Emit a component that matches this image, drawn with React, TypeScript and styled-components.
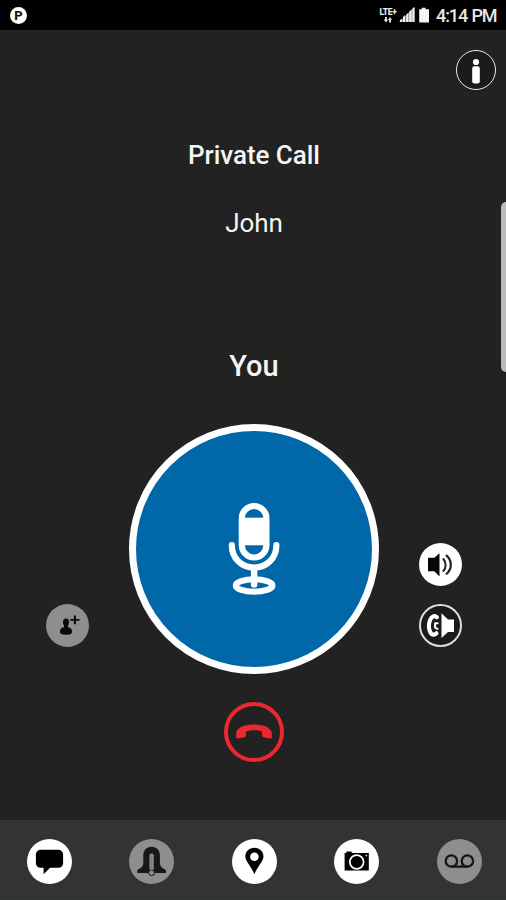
import React from "react";
import styled, { createGlobalStyle } from "styled-components";

const GlobalStyle = createGlobalStyle`
  * { box-sizing: border-box; }
  body { margin: 0; background: #222; }
`;

const Screen = styled.div`
  position: relative;
  width: 506px;
  height: 900px;
  overflow: hidden;
  display: flex;
  flex-direction: column;
  background: #222222;
  color: #f5f5f5;
  font-family: Roboto, "Liberation Sans", sans-serif;
`;

const StatusBar = styled.header`
  flex: none;
  height: 30px;
  background: #000;
  display: flex;
  align-items: center;
  justify-content: space-between;
  padding: 0 11px 0 10px;
`;

const StatusBadge = styled.span`
  width: 17px;
  height: 17px;
  border-radius: 50%;
  background: #fff;
  color: #111;
  font-size: 13px;
  font-weight: 800;
  line-height: 17px;
  text-align: center;
`;

const StatusRight = styled.div`
  display: flex;
  align-items: center;
`;

const Network = styled.div`
  display: flex;
  flex-direction: column;
  align-items: center;
  width: 20px;
  margin-right: 1px;
`;

const NetworkLabel = styled.span`
  font-size: 8.5px;
  font-weight: 800;
  line-height: 9px;
  letter-spacing: -0.3px;
  color: #eee;
`;

const Clock = styled.time`
  width: 59px;
  margin-left: 5px;
  font-size: 18px;
  font-weight: 500;
  line-height: 30px;
  letter-spacing: -1.1px;
  word-spacing: 1px;
  white-space: nowrap;
  color: #e8e8e8;
  padding-top: 1px;
`;

const Glyph = styled.svg`
  display: block;
  flex: none;
`;

const Content = styled.main`
  flex: 1;
  display: flex;
  flex-direction: column;
  padding-left: 2px;
`;

const TopActions = styled.div`
  display: flex;
  justify-content: flex-end;
  height: 110px;
  padding: 20px 10.5px 0 0;
`;

const Label = styled.div<{ $size: number; $weight: number; $gap: number; $track: number }>`
  height: 30px;
  line-height: 30px;
  text-align: center;
  white-space: nowrap;
  font-size: ${(p) => p.$size}px;
  font-weight: ${(p) => p.$weight};
  letter-spacing: ${(p) => p.$track}px;
  margin-bottom: ${(p) => p.$gap}px;
`;

const Controls = styled.section`
  display: grid;
  grid-template-columns: 127.3px 250px 1fr;
  height: 250px;
`;

const SideColumn = styled.div<{ $inset: number; $top: number }>`
  display: flex;
  flex-direction: column;
  gap: 18px;
  padding: ${(p) => p.$top}px 0 0 ${(p) => p.$inset}px;
`;

const RoundButton = styled.button<{ $size: number; $fill: string; $border?: string }>`
  flex: none;
  display: flex;
  align-items: center;
  justify-content: center;
  width: ${(p) => p.$size}px;
  height: ${(p) => p.$size}px;
  padding: 0;
  border: ${(p) => p.$border ?? "0"};
  border-radius: 50%;
  background: ${(p) => p.$fill};
`;

const HangUpRow = styled.div`
  display: flex;
  justify-content: center;
  padding-top: 28px;
`;

const BottomNav = styled.nav`
  flex: none;
  height: 80px;
  display: flex;
  align-items: flex-start;
  justify-content: space-between;
  padding: 18.5px 24px 0 26.5px;
  background: #333333;
  border-bottom: 1px solid #3d3235;
`;

const EdgeHandle = styled.div`
  position: absolute;
  top: 202px;
  right: 0;
  width: 5px;
  height: 170px;
  border-radius: 5px 0 0 5px;
  background: #bbb;
`;

const Signal = () => (
  <Glyph width="16" height="16" viewBox="0 0 16 16">
    <path d="M0 15 15.5 0v15z" fill="#888" />
    <path d="M1 15v-2l2-1v3zM4 15v-5l2-2v7zM7.3 15V7.7l2-2V15zM10.3 15V4.5l2.3-2V15zM13.4 15V1.5l2.1-1.5v15z" fill="#f2f2f2" />
  </Glyph>
);

const Battery = () => (
  <Glyph width="16" height="16" viewBox="0 0 16 16">
    <path d="M4.2 2.2h2.5V.8h3.8v1.4H14V15.4H4.2z" fill="#f5f5f5" />
  </Glyph>
);

const Arrows = () => (
  <Glyph width="10" height="6" viewBox="0 0 10 6">
    <path d="M2 0h2v2.5h1.2L3 5.5.5 2.5H2zM6 5.5V3H5l2-3 2 3H8v2.5z" fill="#ddd" />
  </Glyph>
);

const InfoIcon = () => (
  <Glyph width="38" height="38" viewBox="0 0 38 38">
    <circle cx="19" cy="11" r="3.1" fill="#fff" />
    <rect x="15.2" y="15.2" width="7.6" height="17.2" rx="2.2" fill="#fff" />
  </Glyph>
);

const MicIcon = () => (
  <Glyph width="54" height="94" viewBox="0 0 54 94" fill="none" stroke="#fff" strokeLinecap="round">
    <rect x="14.8" y="4" width="24.6" height="51.5" rx="12.3" strokeWidth="6.2" />
    <path d="M14.5 15.7h25.2v27.6H14.5z" fill="#fff" stroke="none" />
    <path d="M4.8 43.2c0 13 9.7 22.3 22.3 22.3s22.3-9.3 22.3-22.3" strokeWidth="6.2" />
    <path d="M27.1 67v15.5" strokeWidth="6.4" />
    <ellipse cx="27.1" cy="83.5" rx="18.4" ry="6.3" strokeWidth="6" />
  </Glyph>
);

const AddUserIcon = () => (
  <Glyph width="43" height="43" viewBox="0 0 43 43" fill="#080808">
    <ellipse cx="20" cy="18.2" rx="3" ry="3.8" />
    <path d="M18 20h4v3.2c3 .3 4.2 2.2 4 4.8 0 2.2-2.5 2.7-6 2.7s-6-.5-6-2.7c-.2-2.6 1-4.5 4-4.8z" />
    <path d="M27.9 11.6h2v3.4h3.6v1.8h-3.6v3.4h-2v-3.4h-3.6V15h3.6z" />
  </Glyph>
);

const SpeakerIcon = () => (
  <Glyph width="43" height="43" viewBox="0 0 43 43">
    <path d="M9 14.7h6.3l5.2-4.5v23.2l-5.2-5.1H9z" fill="#080808" />
    <g fill="none" stroke="#222" strokeLinecap="round">
      <path d="M24.4 16c3 3.5 3 8.5 0 12" strokeWidth="2" />
      <path d="M27.6 12.6c5.6 5 5.6 13.2 0 18.2" strokeWidth="2.2" />
    </g>
  </Glyph>
);

const EarpieceIcon = () => (
  <Glyph width="39" height="39" viewBox="0 0 39 39">
    <path d="M15.9 11.2c-2.4-2.2-5.2-1-6.7 2.6-1.7 4-1.5 9.6.2 12.8 1.4 2.6 4.2 2.7 6 .7" fill="none" stroke="#fff" strokeWidth="4.2" strokeLinecap="round" />
    <path d="M16.7 17.3h-2.6v4.4l2.4 1.2" fill="none" stroke="#fff" strokeWidth="2" strokeLinecap="round" strokeLinejoin="round" />
    <path d="M20.5 7.3 27 13.6h6v12.4h-6L20.5 32z" fill="#fff" />
  </Glyph>
);

const HangUpIcon = () => (
  <Glyph width="52" height="52" viewBox="0 0 52 52">
    <path d="M8.2 26.8C9.4 20.5 18 18.4 26 18.4s16.6 2.1 17.8 8.4v4.2c0 1.2-.9 1.7-2.1 1.5l-5.6-1c-1.5-.3-2.1-1-2.1-2.4v-3.5c-4.9-1.7-11.1-1.7-16 0v3.5c0 1.4-.6 2.1-2.1 2.4l-5.6 1c-1.2.2-2.1-.3-2.1-1.5z" fill="#ed2731" />
  </Glyph>
);

const ChatIcon = () => (
  <Glyph width="45" height="45" viewBox="0 0 45 45">
    <path d="M13.5 10.8h18a4.6 4.6 0 0 1 4.6 4.6v8.8a4.6 4.6 0 0 1-4.6 4.6h-8.4l-6.5 6.4v-6.4h-3.1a4.6 4.6 0 0 1-4.6-4.6v-8.8a4.6 4.6 0 0 1 4.6-4.6z" />
  </Glyph>
);

const BellIcon = () => (
  <Glyph width="45" height="45" viewBox="0 0 45 45">
    <path d="M22.6 7.8c5.3 0 8.3 3.7 8.3 8.7v8.3c.6 3.3 2.8 4.6 6 6.1v3H8.3v-3c3.2-1.5 5.4-2.8 6-6.1v-8.3c0-5 3-8.7 8.3-8.7z" fill="#181818" />
    <path d="M22.6 16.5v17" stroke="#8e8e8e" strokeWidth="4.2" strokeLinecap="round" />
    <circle cx="22.6" cy="33.8" r="2.9" fill="#8e8e8e" stroke="#181818" strokeWidth="1" />
    <path d="M22.6 17v14" stroke="#777" strokeWidth="1" />
  </Glyph>
);

const PinIcon = () => (
  <Glyph width="45" height="45" viewBox="0 0 45 45">
    <path fillRule="evenodd" d="M22.4 8.8c5.2 0 9.1 3.7 9.1 8.8 0 4.3-5.8 10.1-9.1 17.6-3.3-7.5-9.1-13.3-9.1-17.6 0-5.1 3.9-8.8 9.1-8.8zm0 4.6a4.3 4.3 0 1 0 0 8.6 4.3 4.3 0 0 0 0-8.6z" />
  </Glyph>
);

const CameraIcon = () => (
  <Glyph width="45" height="45" viewBox="0 0 45 45">
    <path d="M10.6 14h1.8v-1.5h5.2V14h17.2v17.6H10.6z" />
    <circle cx="22.7" cy="23" r="6.9" stroke="#fff" strokeWidth="1.7" />
    <circle cx="32.4" cy="16.6" r=".8" fill="#fff" />
  </Glyph>
);

const VoicemailIcon = () => (
  <Glyph width="45" height="45" viewBox="0 0 45 45" fill="none" stroke="#151515" strokeWidth="2.3">
    <circle cx="14.4" cy="22" r="5.7" />
    <circle cx="30.4" cy="22" r="5.7" />
    <path d="M14.4 27.6h16" />
  </Glyph>
);

const navItems = [
  { label: "Messages", fill: "#fff", Icon: ChatIcon },
  { label: "Alert", fill: "#8e8e8e", Icon: BellIcon },
  { label: "Location", fill: "#fff", Icon: PinIcon },
  { label: "Camera", fill: "#fff", Icon: CameraIcon },
  { label: "Voicemail", fill: "#8e8e8e", Icon: VoicemailIcon },
];

export default function App() {
  return (
    <Screen>
      <GlobalStyle />
      <StatusBar>
        <StatusBadge>P</StatusBadge>
        <StatusRight>
          <Network>
            <NetworkLabel>LTE+</NetworkLabel>
            <Arrows />
          </Network>
          <Signal />
          <Battery />
          <Clock>4:14 PM</Clock>
        </StatusRight>
      </StatusBar>
      <Content>
        <TopActions>
          <RoundButton $size={40} $fill="#1b1b1b" $border="1.5px solid #eee" aria-label="Info">
            <InfoIcon />
          </RoundButton>
        </TopActions>
        <Label $size={26} $weight={500} $gap={38} $track={-0.05}>Private Call</Label>
        <Label $size={26} $weight={400} $gap={113} $track={-0.1}>John</Label>
        <Label $size={29} $weight={500} $gap={43} $track={0.1}>You</Label>
        <Controls>
          <SideColumn $inset={44} $top={179.5}>
            <RoundButton $size={43} $fill="#8e8e8e" aria-label="Add participant">
              <AddUserIcon />
            </RoundButton>
          </SideColumn>
          <RoundButton $size={250} $fill="#0067a8" $border="7px solid #fff" aria-label="Talk">
            <MicIcon />
          </RoundButton>
          <SideColumn $inset={39.7} $top={119}>
            <RoundButton $size={43} $fill="#fff" aria-label="Speaker">
              <SpeakerIcon />
            </RoundButton>
            <RoundButton $size={43} $fill="#1b1b1b" $border="2px solid #ddd" aria-label="Earpiece">
              <EarpieceIcon />
            </RoundButton>
          </SideColumn>
        </Controls>
        <HangUpRow>
          <RoundButton $size={60} $fill="transparent" $border="4px solid #ed2731" aria-label="End call">
            <HangUpIcon />
          </RoundButton>
        </HangUpRow>
      </Content>
      <BottomNav>
        {navItems.map(({ label, fill, Icon }) => (
          <RoundButton key={label} $size={45} $fill={fill} aria-label={label}>
            <Icon />
          </RoundButton>
        ))}
      </BottomNav>
      <EdgeHandle />
    </Screen>
  );
}
